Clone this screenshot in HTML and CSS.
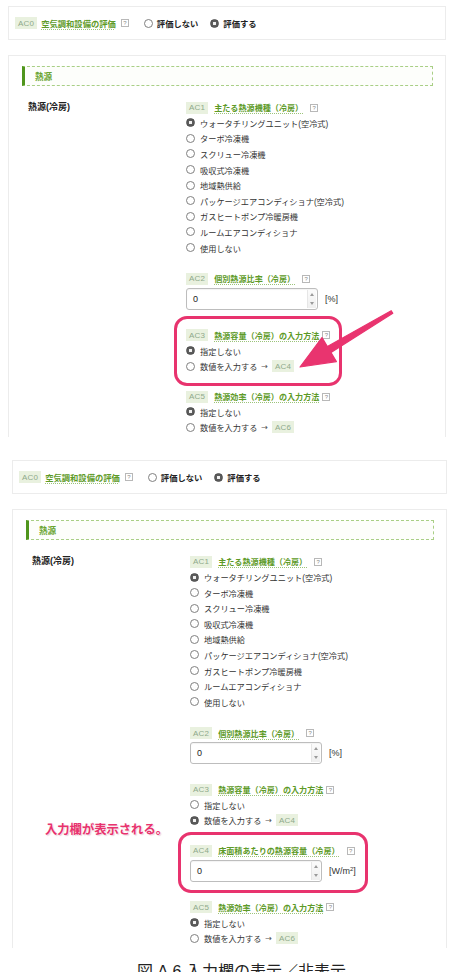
FILE: index.html
```html
<!DOCTYPE html>
<html lang="ja">
<head>
<meta charset="utf-8">
<title>入力欄の表示／非表示</title>
<link rel="stylesheet" href="styles.css">
</head>
<body>
<section class="shot shot-a">
  <div class="evalbox">
    <span class="badge">AC0</span>
    <span class="title">空気調和設備の評価</span>
    <span class="help">?</span>
    <span class="eopt"><span class="radio"></span>評価しない</span>
    <span class="eopt"><span class="radio on"></span>評価する</span>
  </div>
  <div class="mainbox">
    <div class="secthead">熱源</div>
    <div class="row">
      <div class="rowlabel">熱源(冷房)</div>
      <div class="field">
        <div class="group">
          <div class="ghead"><span class="badge">AC1</span><span class="title">主たる熱源機種（冷房）</span><span class="help help-far">?</span></div>
          <div class="opt"><span class="radio on"></span>ウォータチリングユニット(空冷式)</div>
          <div class="opt"><span class="radio"></span>ターボ冷凍機</div>
          <div class="opt"><span class="radio"></span>スクリュー冷凍機</div>
          <div class="opt"><span class="radio"></span>吸収式冷凍機</div>
          <div class="opt"><span class="radio"></span>地域熱供給</div>
          <div class="opt"><span class="radio"></span>パッケージエアコンディショナ(空冷式)</div>
          <div class="opt"><span class="radio"></span>ガスヒートポンプ冷暖房機</div>
          <div class="opt"><span class="radio"></span>ルームエアコンディショナ</div>
          <div class="opt"><span class="radio"></span>使用しない</div>
        </div>
        <div class="group">
          <div class="ghead"><span class="badge">AC2</span><span class="title">個別熱源比率（冷房）</span><span class="help help-far">?</span></div>
          <div class="num"><span class="numbox">0<span class="spin"><i class="up"></i><i class="down"></i></span></span><span class="unit">[%]</span></div>
        </div>
        <div class="group group-after-input hl">
          <div class="ghead"><span class="badge">AC3</span><span class="title">熱源容量（冷房）の入力方法</span><span class="help">?</span></div>
          <div class="opt"><span class="radio on"></span>指定しない</div>
          <div class="opt"><span class="radio"></span>数値を入力する<span class="arrow">→</span><span class="badge">AC4</span></div>
        </div>
        <div class="group group-tight">
          <div class="ghead"><span class="badge">AC5</span><span class="title">熱源効率（冷房）の入力方法</span><span class="help">?</span></div>
          <div class="opt"><span class="radio on"></span>指定しない</div>
          <div class="opt"><span class="radio"></span>数値を入力する<span class="arrow">→</span><span class="badge">AC6</span></div>
        </div>
      </div>
    </div>
  </div>
  <svg class="pointer" width="120" height="80" viewBox="288 306 120 80" aria-hidden="true">
    <polygon points="300,367 336.4,361.6 331,352.6 392.8,313.3 391.2,310.7 327.4,346.6 322,337.6" fill="#e9346f" stroke="#e9346f" stroke-width="1.2" stroke-linejoin="round"/>
  </svg>
</section>

<section class="shot shot-b">
  <div class="evalbox">
    <span class="badge">AC0</span>
    <span class="title">空気調和設備の評価</span>
    <span class="help">?</span>
    <span class="eopt"><span class="radio"></span>評価しない</span>
    <span class="eopt"><span class="radio on"></span>評価する</span>
  </div>
  <div class="mainbox">
    <div class="secthead">熱源</div>
    <div class="row">
      <div class="rowlabel">熱源(冷房)</div>
      <div class="field">
        <div class="group">
          <div class="ghead"><span class="badge">AC1</span><span class="title">主たる熱源機種（冷房）</span><span class="help help-far">?</span></div>
          <div class="opt"><span class="radio on"></span>ウォータチリングユニット(空冷式)</div>
          <div class="opt"><span class="radio"></span>ターボ冷凍機</div>
          <div class="opt"><span class="radio"></span>スクリュー冷凍機</div>
          <div class="opt"><span class="radio"></span>吸収式冷凍機</div>
          <div class="opt"><span class="radio"></span>地域熱供給</div>
          <div class="opt"><span class="radio"></span>パッケージエアコンディショナ(空冷式)</div>
          <div class="opt"><span class="radio"></span>ガスヒートポンプ冷暖房機</div>
          <div class="opt"><span class="radio"></span>ルームエアコンディショナ</div>
          <div class="opt"><span class="radio"></span>使用しない</div>
        </div>
        <div class="group">
          <div class="ghead"><span class="badge">AC2</span><span class="title">個別熱源比率（冷房）</span><span class="help help-far">?</span></div>
          <div class="num"><span class="numbox">0<span class="spin"><i class="up"></i><i class="down"></i></span></span><span class="unit">[%]</span></div>
        </div>
        <div class="group group-after-input">
          <div class="ghead"><span class="badge">AC3</span><span class="title">熱源容量（冷房）の入力方法</span><span class="help">?</span></div>
          <div class="opt"><span class="radio"></span>指定しない</div>
          <div class="opt"><span class="radio on"></span>数値を入力する<span class="arrow">→</span><span class="badge">AC4</span></div>
        </div>
        <div class="group group-tight hl">
          <div class="ghead"><span class="badge">AC4</span><span class="title">床面積あたりの熱源容量（冷房）</span><span class="help help-far">?</span></div>
          <div class="num"><span class="numbox">0<span class="spin"><i class="up"></i><i class="down"></i></span></span><span class="unit">[W/m<sup>2</sup>]</span></div>
        </div>
        <div class="group group-after-input">
          <div class="ghead"><span class="badge">AC5</span><span class="title">熱源効率（冷房）の入力方法</span><span class="help">?</span></div>
          <div class="opt"><span class="radio on"></span>指定しない</div>
          <div class="opt"><span class="radio"></span>数値を入力する<span class="arrow">→</span><span class="badge">AC6</span></div>
        </div>
      </div>
    </div>
  </div>
  <p class="note">入力欄が表示される。</p>
</section>

<p class="caption">図 A.6 入力欄の表示／非表示</p>
</body>
</html>
```

FILE: styles.css
```css
* { box-sizing: border-box; }

body {
  margin: 0;
  width: 457px;
  background: #fff;
  color: #333;
  font-family: "Liberation Sans", "Noto Sans CJK JP", sans-serif;
}

.shot { position: relative; }
.shot-a { margin: 6px 0 0 8px; width: 438px; }
.shot-b { margin: 23px 0 0 12px; width: 435px; }

/* AC0 evaluation bar */
.evalbox {
  height: 34px;
  border: 1px solid #ececec;
  display: flex;
  align-items: center;
  padding-left: 6px;
  font-size: 8.3px;
}
.evalbox .title { margin-left: 4px; }
.evalbox .help { margin-left: 5px; }
.eopt {
  display: flex;
  align-items: center;
  margin-left: 12px;
  font-weight: bold;
  color: #222;
}
.evalbox .help + .eopt { margin-left: 15px; }
.eopt .radio { margin-right: 4px; }

/* main box */
.mainbox {
  margin-top: 15px;
  border: 1px solid #ececec;
  border-bottom: 0;
  padding: 10px 12px 2px 13px;
}
.secthead {
  height: 20px;
  border: 1px dashed #a9cf86;
  border-left: 3px solid #4f951c;
  display: flex;
  align-items: center;
  padding-left: 10px;
  font-size: 8.6px;
  font-weight: bold;
  color: #6aa432;
  background: #fdfefb;
}

.row {
  display: flex;
  margin-top: 14px;
  padding-left: 6px;
}
.rowlabel {
  width: 158px;
  flex: none;
  font-size: 9px;
  font-weight: bold;
  color: #222;
  line-height: 15px;
}
.field {
  display: flex;
  flex-direction: column;
  align-items: flex-start;
}

.group { position: relative; }
.group + .group { margin-top: 16px; }
.group + .group-after-input { margin-top: 18px; }
.group + .group-tight { margin-top: 15px; }

.ghead {
  display: flex;
  align-items: center;
  height: 15px;
  font-size: 8.1px;
}
.ghead .title { margin-left: 6px; }
.ghead .help { margin-left: 3px; }
.ghead .help-far { margin-left: 7px; }

.badge {
  display: inline-flex;
  align-items: center;
  height: 12px;
  padding: 0 3px;
  background: #e9f1df;
  color: #8ea98a;
  font-family: "Liberation Sans", sans-serif;
  font-size: 8px;
  letter-spacing: 0.2px;
}

.title {
  color: #5d9a27;
  font-weight: bold;
  text-decoration: underline dotted #9cc47a;
  text-underline-offset: 2px;
}

.help {
  display: inline-flex;
  align-items: center;
  justify-content: center;
  width: 8px;
  height: 8px;
  border: 1px solid #b8b8b8;
  color: #8c8c8c;
  font-size: 6px;
  line-height: 1;
  font-family: "Liberation Sans", sans-serif;
}

.opt {
  display: flex;
  align-items: center;
  height: 15.6px;
  font-size: 8.2px;
  color: #333;
}
.radio {
  width: 9px;
  height: 9px;
  flex: none;
  border: 1px solid #808080;
  border-radius: 50%;
  background: #fff;
  margin-right: 5px;
}
.radio.on {
  border-color: #4d4d4d;
  background: radial-gradient(circle, #f2f2f2 0 1.4px, #5c5c5c 2px);
}
.arrow {
  margin: 0 4px 0 4px;
  font-family: "DejaVu Sans", sans-serif;
  font-size: 8px;
  color: #555;
}

/* number input */
.num {
  display: flex;
  align-items: center;
  margin-top: 1.5px;
}
.numbox {
  width: 132px;
  height: 22px;
  display: flex;
  align-items: center;
  padding-left: 6px;
  border: 1px solid #bdbdbd;
  border-radius: 3px;
  background: #fff;
  box-shadow: inset 0 1px 1px rgba(0, 0, 0, 0.05);
  font-size: 9px;
  color: #222;
}
.spin {
  margin-left: auto;
  margin-right: 1px;
  width: 9px;
  height: 18px;
  display: flex;
  flex-direction: column;
  align-items: center;
  justify-content: space-between;
  padding: 3px 0;
  background: linear-gradient(#fbfbfb, #efefef);
  border-left: 1px solid #e6e6e6;
}
.spin i {
  display: block;
  width: 0;
  height: 0;
  border-left: 2px solid transparent;
  border-right: 2px solid transparent;
}
.spin .up { border-bottom: 3px solid #9a9a9a; }
.spin .down { border-top: 3px solid #9a9a9a; }
.unit {
  margin-left: 7px;
  font-size: 9px;
  color: #333;
}
.unit sup {
  font-size: 6px;
  vertical-align: 3px;
  line-height: 0;
}

/* annotations */
.hl::before {
  content: "";
  position: absolute;
  top: -11.5px;
  bottom: -11.5px;
  left: -12px;
  right: -12px;
  border: 3px solid #e8336e;
  border-radius: 13px;
  pointer-events: none;
}
.pointer {
  position: absolute;
  left: 280px;
  top: 300px;
}
.note {
  position: absolute;
  left: 33px;
  top: 361px;
  margin: 0;
  font-family: "Noto Sans CJK JP", sans-serif;
  font-size: 12.3px;
  line-height: 16px;
  font-weight: bold;
  color: #e8336e;
  text-shadow: 0 0 2px #fff, 1px 1px 1px rgba(160, 40, 80, 0.25);
}

.caption {
  margin: 16px 0 0 137px;
  font-family: "Liberation Sans", "Noto Sans CJK JP", sans-serif;
  font-size: 16px;
  line-height: 16px;
  color: #222;
  white-space: nowrap;
}
```
